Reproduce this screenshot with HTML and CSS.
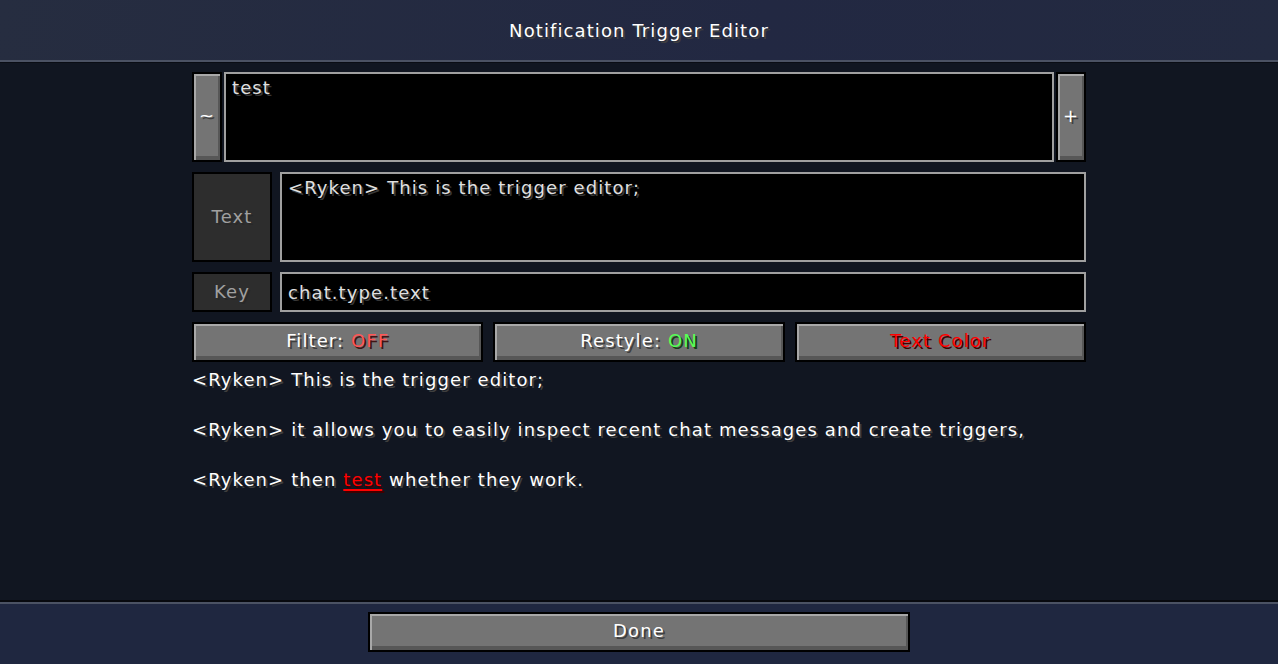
FILE: index.html
```html
<!DOCTYPE html>
<html>
<head>
<meta charset="utf-8">
<title>Notification Trigger Editor</title>
<link rel="stylesheet" href="styles.css">
</head>
<body>
<div class="screen">
  <header class="header">
    <div class="title mc">Notification Trigger Editor</div>
  </header>
  <main class="main">
    <div class="content">
      <div class="row row-tall">
        <div class="btn btn-side mc"><span>~</span></div>
        <div class="field field-grow mc">test</div>
        <div class="btn btn-side mc"><span>+</span></div>
      </div>
      <div class="row row-tall row-gap">
        <div class="label-box mc">Text</div>
        <div class="field field-grow mc">&lt;Ryken&gt; This is the trigger editor;</div>
      </div>
      <div class="row row-short row-gap">
        <div class="label-box mc">Key</div>
        <div class="field field-grow field-center mc"><span>chat.type.text</span></div>
      </div>
      <div class="row row-short btn-row">
        <div class="btn btn-wide mc"><span>Filter: <span class="off">OFF</span></span></div>
        <div class="btn btn-wide mc"><span>Restyle: <span class="on">ON</span></span></div>
        <div class="btn btn-wide mc"><span class="red">Text Color</span></div>
      </div>
      <div class="chat">
        <div class="chat-line mc">&lt;Ryken&gt; This is the trigger editor;</div>
        <div class="chat-line mc">&lt;Ryken&gt; it allows you to easily inspect recent chat messages and create triggers,</div>
        <div class="chat-line mc">&lt;Ryken&gt; then <span class="hl">test</span> whether they work.</div>
      </div>
    </div>
  </main>
  <footer class="footer">
    <div class="btn btn-done mc"><span>Done</span></div>
  </footer>
</div>
</body>
</html>
```
FILE: styles.css
```css
html, body {
  margin: 0;
  padding: 0;
  background: #111621;
}
.screen {
  width: 1278px;
  height: 664px;
  display: flex;
  flex-direction: column;
  overflow: hidden;
}
.mc {
  font-family: "DejaVu Sans", sans-serif;
  font-size: 18px;
  line-height: 20px;
  color: #ffffff;
  text-shadow: 2px 2px 0 #3f3f3f;
  letter-spacing: 1.1px;
  white-space: nowrap;
}
.header {
  height: 60px;
  flex: none;
  background: linear-gradient(100deg, #262d40 0%, #222842 60%, #232a40 100%);
  border-bottom: 2px solid #4b5263;
  display: flex;
  align-items: center;
  justify-content: center;
}
.title {
  color: #ffffff;
  padding-top: 2px;
}
.main {
  flex: 1;
  border-top: 1px solid #0a0d14;
  background: #111621;
  display: flex;
  justify-content: center;
}
.content {
  width: 894px;
  padding-top: 9px;
  display: flex;
  flex-direction: column;
}
.row {
  display: flex;
  align-items: stretch;
  gap: 2px;
}
.row-tall { height: 90px; }
.row-short { height: 40px; }
.row-gap { gap: 8px; margin-top: 10px; }
.btn-row { gap: 10px; margin-top: 10px; }

.btn {
  box-sizing: border-box;
  background: #747474;
  border: 2px solid #000000;
  box-shadow: inset 2px 2px 0 #a8a8a8, inset -2px -4px 0 #575757;
  display: flex;
  align-items: center;
  justify-content: center;
  padding-bottom: 2px;
}
.btn-side { width: 30px; flex: none; }
.btn-wide { flex: 1; }
.field {
  box-sizing: border-box;
  background: #000000;
  border: 2px solid #a0a0a0;
  color: #e0e0e0;
  padding: 4px 6px 2px 6px;
  text-shadow: 2px 2px 0 #383838;
}
.field-grow { flex: 1; }
.field-center { display: flex; align-items: center; padding-top: 2px; padding-bottom: 0; }
.label-box {
  box-sizing: border-box;
  width: 80px;
  flex: none;
  background: #2d2d2d;
  border: 2px solid #000000;
  color: #a0a0a0;
  text-shadow: 2px 2px 0 #282828;
  display: flex;
  align-items: center;
  justify-content: center;
}
.off { color: #ff5555; text-shadow: 2px 2px 0 #3f1515; }
.on { color: #55ff55; text-shadow: 2px 2px 0 #153f15; }
.red { color: #ff0000; text-shadow: 2px 2px 0 #3f0000; }
.chat {
  margin-top: 8px;
  display: flex;
  flex-direction: column;
  gap: 30px;
}
.hl {
  color: #ff0000;
  text-shadow: 2px 2px 0 #3f0000;
  text-decoration: underline;
  text-decoration-thickness: 2px;
  text-underline-offset: 3px;
}
.footer {
  box-sizing: border-box;
  height: 64px;
  flex: none;
  background: #1f2740;
  border-top: 2px solid #07090e;
  box-shadow: inset 0 2px 0 #4b5263;
  display: flex;
  justify-content: center;
  padding-top: 10px;
}
.btn-done {
  width: 542px;
  height: 40px;
}
```
